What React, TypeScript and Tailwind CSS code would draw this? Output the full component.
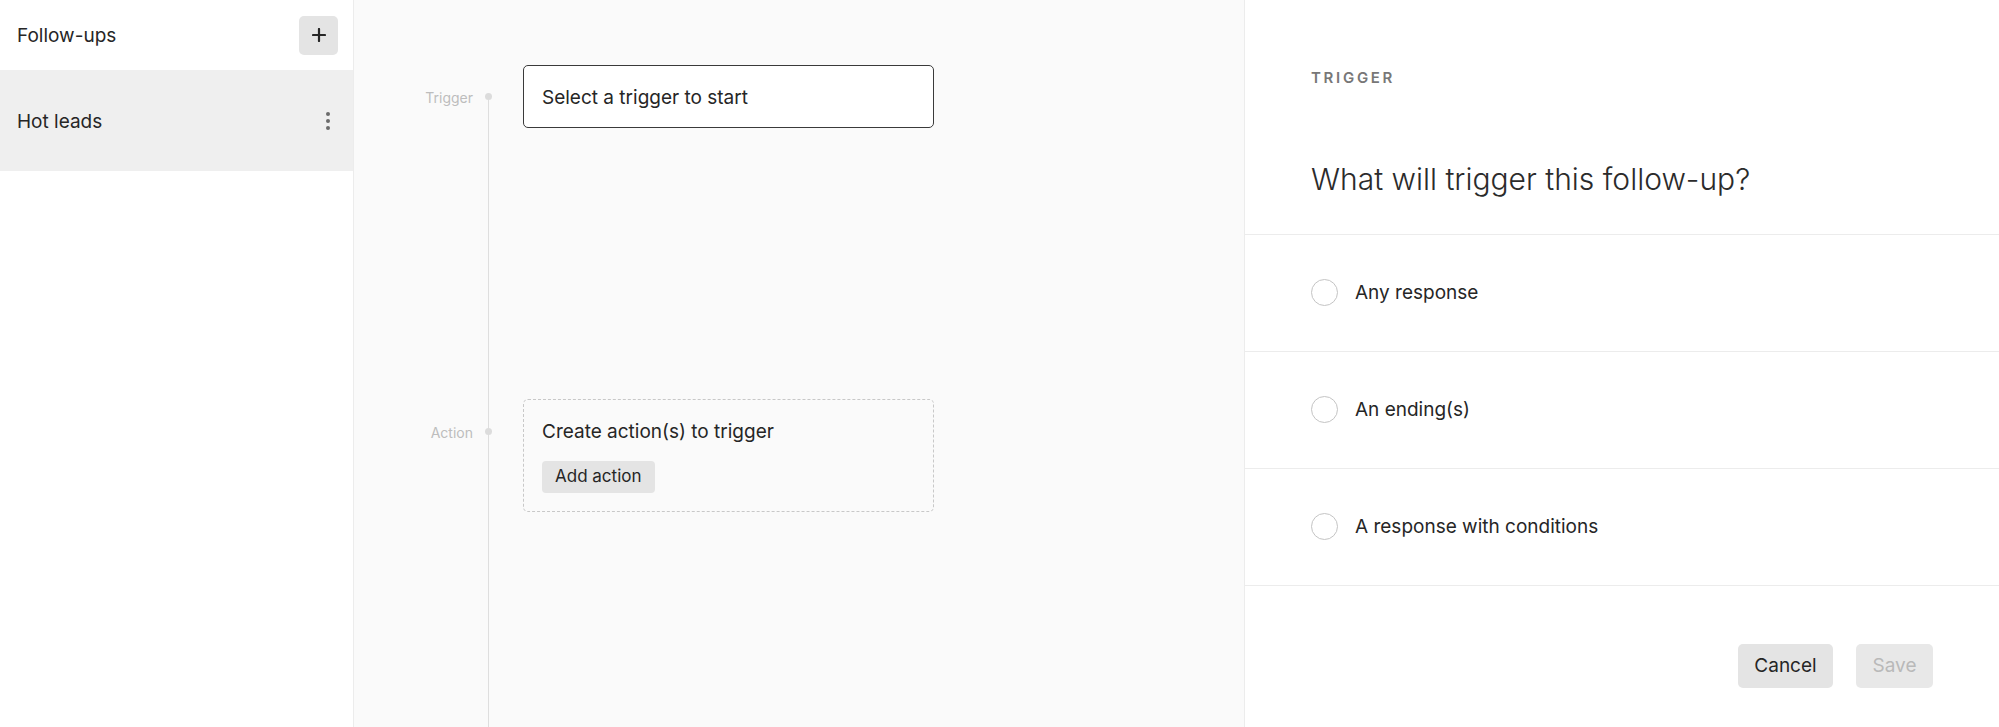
const options = ['Any response', 'An ending(s)', 'A response with conditions'];

const font = { fontFamily: 'Inter, "Noto Sans", sans-serif' };

const Kebab = () => (
  <div className="flex flex-col items-center gap-[3px] w-[20px]">
    <span className="w-[4px] h-[4px] rounded-full bg-[#6b6b6b]" />
    <span className="w-[4px] h-[4px] rounded-full bg-[#6b6b6b]" />
    <span className="w-[4px] h-[4px] rounded-full bg-[#6b6b6b]" />
  </div>
);

const Sidebar = () => (
  <aside className="w-[354px] shrink-0 border-r border-[#ececec] bg-white">
    <div className="h-[70px] flex items-center justify-between pl-[17px] pr-[15px]">
      <span className="pt-[2px] text-[19px] text-[#262626]">Follow-ups</span>
      <button className="w-[39px] h-[39px] rounded-[5px] bg-[#e4e4e4] flex items-center justify-center">
        <svg width="14" height="14" viewBox="0 0 14 14">
          <path d="M7 1v12M1 7h12" stroke="#262626" strokeWidth="2.2" strokeLinecap="round" />
        </svg>
      </button>
    </div>
    <div className="h-[101px] bg-[#efefef] flex items-center justify-between pl-[17px] pr-[15px]">
      <span className="pt-[3px] text-[19px] text-[#262626]">Hot leads</span>
      <Kebab />
    </div>
  </aside>
);

const StepLabel = ({ label, h }: { label: string; h: string }) => (
  <div className={`w-[138px] shrink-0 flex items-center justify-end ${h}`}>
    <span className="pt-[2px] text-[14px] text-[#bdbdbd] mr-[12px]">{label}</span>
    <span className="relative z-10 w-[7px] h-[7px] rounded-full bg-[#dcdcdc]" />
  </div>
);

const Canvas = () => (
  <main className="relative flex-1 bg-[#fafafa] pt-[65px]">
    <div className="absolute left-[134px] top-[100px] bottom-0 w-px bg-[#dedede]" />
    <div className="flex items-start">
      <StepLabel label="Trigger" h="h-[63px]" />
      <div className="ml-[31px] w-[411px] h-[63px] rounded-[5px] border border-[#3a3a3a] bg-white flex items-center pl-[18px]">
        <span className="pt-[3px] text-[19px] text-[#262626]">Select a trigger to start</span>
      </div>
    </div>
    <div className="flex items-start mt-[271px]">
      <StepLabel label="Action" h="h-[64px]" />
      <div className="ml-[31px] w-[411px] h-[113px] rounded-[5px] border border-dashed border-[#c8c8c8] pl-[18px] pt-[19px]">
        <div className="text-[19px] text-[#262626] leading-[26px]">Create action(s) to trigger</div>
        <button className="mt-[16px] h-[32px] px-[13px] rounded-[4px] bg-[#e4e4e4] text-[17px] text-[#262626]">
          Add action
        </button>
      </div>
    </div>
  </main>
);

const TriggerPanel = () => (
  <section className="w-[755px] shrink-0 border-l border-[#ececec] bg-white flex flex-col">
    <div className="h-[235px] pl-[66px] pt-[69px] border-b border-[#ececec]">
      <div className="text-[15px] font-semibold tracking-[0.18em] text-[#777777] leading-[18px]">TRIGGER</div>
      <h2 className="mt-[74px] text-[30px] font-light text-[#2b2b2b] leading-[36px]">
        What will trigger this follow-up?
      </h2>
    </div>
    {options.map((o) => (
      <div key={o} className="h-[117px] flex items-center pl-[66px] pb-[2px] border-b border-[#ececec]">
        <span className="w-[27px] h-[27px] rounded-full border-[1.5px] border-[#c4c4c4] bg-white" />
        <span className="ml-[17px] pt-[2px] text-[19px] text-[#262626]">{o}</span>
      </div>
    ))}
    <div className="flex-1 flex items-start justify-end pt-[58px] pr-[66px] gap-[23px]">
      <button className="h-[44px] w-[95px] rounded-[5px] bg-[#e4e4e4] text-[19px] text-[#262626]">Cancel</button>
      <button className="h-[44px] w-[77px] rounded-[5px] bg-[#e8e8e8] text-[19px] text-[#b9b9b9]">Save</button>
    </div>
  </section>
);

export default function App() {
  return (
    <div className="h-[727px] w-[1999px] flex overflow-hidden" style={font}>
      <Sidebar />
      <Canvas />
      <TriggerPanel />
    </div>
  );
}
